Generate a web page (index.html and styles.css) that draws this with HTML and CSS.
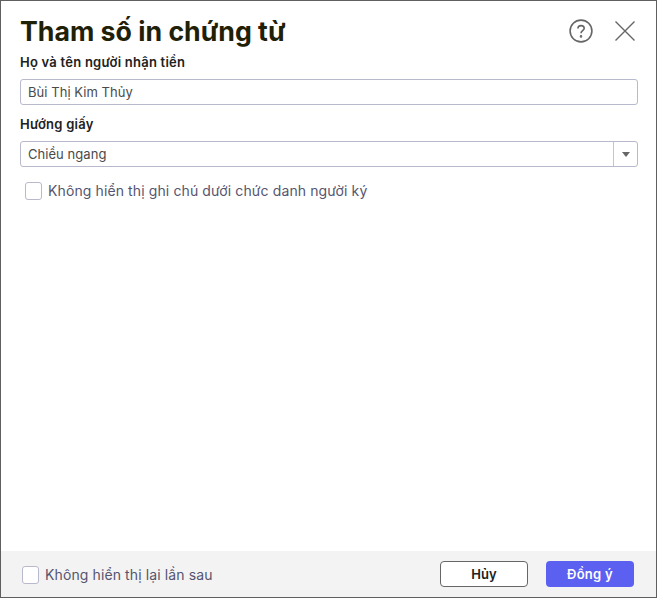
FILE: index.html
```html
<!DOCTYPE html>
<html lang="vi">
<head>
<meta charset="utf-8">
<title>Tham số in chứng từ</title>
<link rel="stylesheet" href="styles.css">
</head>
<body>
<div class="dialog">
  <div class="main">
    <header class="head">
      <h1 class="title">Tham số in chứng từ</h1>
      <div class="head-icons">
        <svg class="icon-help" width="24" height="24" viewBox="0 0 24 24" fill="none" stroke="#666" stroke-width="1.6"><circle cx="12" cy="12" r="10.9"/><path d="M8.9 9.6c0-1.9 1.4-3 3.2-3s3.1 1.1 3.1 2.7c0 2.4-3.2 2.400-3.200 5"/><circle cx="12" cy="17.400" r=".5" fill="#666"/></svg>
        <svg class="icon-close" width="20" height="20" viewBox="0 0 20 20" fill="none" stroke="#666" stroke-width="1.4"><path d="M.5.5l19 19M19.500.5l-19 19"/></svg>
      </div>
    </header>
    <label class="label">Họ và tên người nhận tiền</label>
    <div class="input">Bùi Thị Kim Thủy</div>
    <label class="label label-second">Hướng giấy</label>
    <div class="input select">
      <span class="select-value">Chiều ngang</span>
      <span class="select-arrow"><i class="caret"></i></span>
    </div>
    <div class="check-row">
      <span class="check"></span>
      <span class="check-text">Không hiển thị ghi chú dưới chức danh người ký</span>
    </div>
  </div>
  <footer class="foot">
    <div class="foot-check">
      <span class="check"></span>
      <span class="check-text">Không hiển thị lại lần sau</span>
    </div>
    <div class="buttons">
      <button class="btn btn-cancel">Hủy</button>
      <button class="btn btn-ok">Đồng ý</button>
    </div>
  </footer>
</div>
</body>
</html>
```
FILE: styles.css
```css
* { box-sizing: border-box; }
html, body { margin: 0; height: 100%; }
body { font-family: Inter, "Noto Sans", sans-serif; background: #fff; }
.dialog {
  width: 657px; height: 598px;
  border: 1px solid #5f5f5f;
  display: flex; flex-direction: column;
  background: #fff;
}
.main { flex: 1; padding: 0 18px 0 19px; }
.head { display: flex; justify-content: space-between; align-items: center; height: 53px; padding-top: 7px; }
.title { margin: 0; font-size: 26.7px; line-height: 44px; font-weight: 700; color: #1f2106; }
.head-icons { display: flex; align-items: center; gap: 22px; padding-right: 3px; margin-top: -1px; }
.label { display: block; font-size: 13px; line-height: 16px; font-weight: 600; letter-spacing: .24px; color: #212121; height: 25px; }
.label-second { margin-top: 11px; }
.input {
  height: 26px; border: 1px solid #b9b9cd; border-radius: 3px;
  font-size: 13px; line-height: 24px; letter-spacing: .05px; color: #4a4a4a; padding-left: 7px;
  background: #fff;
}
.select { display: flex; justify-content: space-between; padding-right: 0; }
.select-arrow { width: 24px; border-left: 1px solid #c4c4d2; display: flex; align-items: center; justify-content: center; }
.caret { width: 0; height: 0; border-left: 4.500px solid transparent; border-right: 4.500px solid transparent; border-top: 5px solid #666; }
.check-row { display: flex; align-items: center; gap: 6px; margin: 14px 0 0 5px; height: 20px; }
.check { width: 17px; height: 18px; border: 1px solid #b9b9cd; border-radius: 3px; background: #fff; flex: none; }
.check-text { font-size: 14px; line-height: 20px; letter-spacing: .11px; color: #55556f; }
.foot {
  height: 46px; background: #f3f3f3;
  display: flex; align-items: center; justify-content: space-between;
  padding: 0 22px 0 21px;
}
.foot-check { display: flex; align-items: center; gap: 6px; padding-top: 1px; }
.buttons { display: flex; gap: 18px; }
.btn { width: 88px; height: 26px; border-radius: 4px; font-family: inherit; font-size: 13px; font-weight: 600; padding: 0; }
.btn-cancel { background: #fff; border: 1px solid #666; color: #212121; }
.btn-ok { background: #5b60f0; border: 0; color: #fff; letter-spacing: .3px; }
```
